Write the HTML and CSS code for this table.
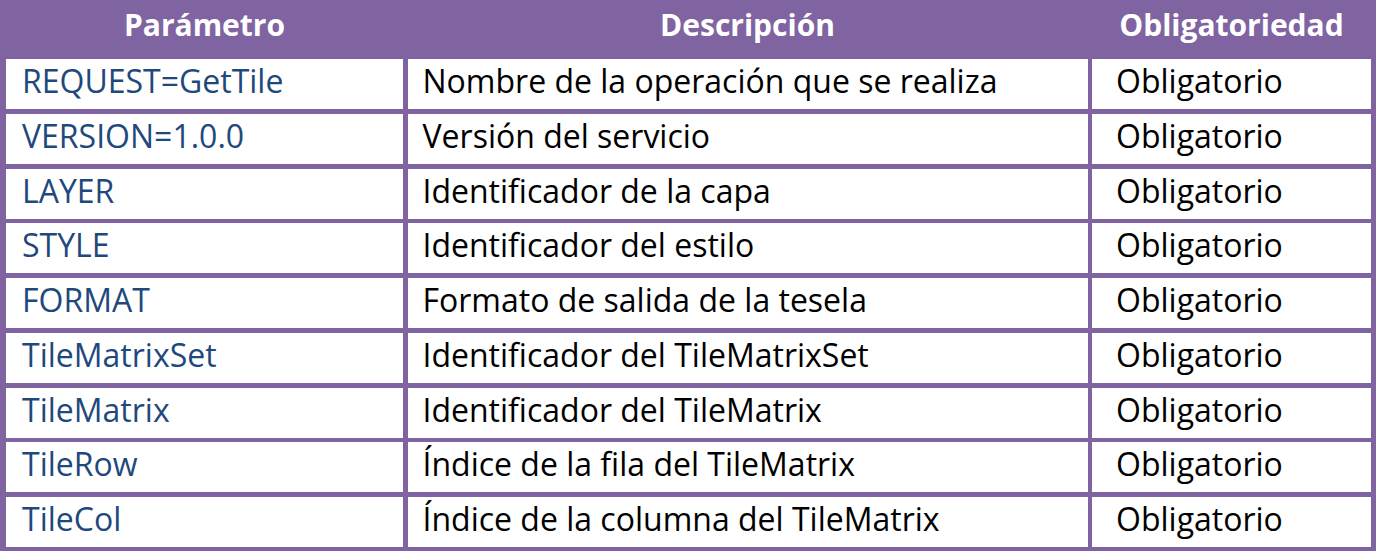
FILE: index.html
```html
<!DOCTYPE html>
<html lang="es">
<head>
<meta charset="utf-8">
<title>Parámetros GetTile</title>
<link rel="stylesheet" href="styles.css">
</head>
<body>
<div class="params" role="table">
  <div class="head" role="columnheader">Parámetro</div>
  <div class="head" role="columnheader">Descripción</div>
  <div class="head" role="columnheader">Obligatoriedad</div>

  <div class="cell param">REQUEST=GetTile</div>
  <div class="cell">Nombre de la operación que se realiza</div>
  <div class="cell req">Obligatorio</div>

  <div class="cell param">VERSION=1.0.0</div>
  <div class="cell">Versión del servicio</div>
  <div class="cell req">Obligatorio</div>

  <div class="cell param">LAYER</div>
  <div class="cell">Identificador de la capa</div>
  <div class="cell req">Obligatorio</div>

  <div class="cell param">STYLE</div>
  <div class="cell">Identificador del estilo</div>
  <div class="cell req">Obligatorio</div>

  <div class="cell param">FORMAT</div>
  <div class="cell">Formato de salida de la tesela</div>
  <div class="cell req">Obligatorio</div>

  <div class="cell param">TileMatrixSet</div>
  <div class="cell">Identificador del TileMatrixSet</div>
  <div class="cell req">Obligatorio</div>

  <div class="cell param">TileMatrix</div>
  <div class="cell">Identificador del TileMatrix</div>
  <div class="cell req">Obligatorio</div>

  <div class="cell param">TileRow</div>
  <div class="cell">Índice de la fila del TileMatrix</div>
  <div class="cell req">Obligatorio</div>

  <div class="cell param">TileCol</div>
  <div class="cell">Índice de la columna del TileMatrix</div>
  <div class="cell req">Obligatorio</div>
</div>
</body>
</html>
```
FILE: styles.css
```css
html, body {
  margin: 0;
  padding: 0;
  background: #ffffff;
}

.params {
  display: grid;
  grid-template-columns: 397px 680px 279px;
  grid-template-rows: 54.25px repeat(9, 50px);
  column-gap: 4.5px;
  row-gap: 4.75px;
  width: fit-content;
  padding: 0 5px 4px 6px;
  background: #8064a2;
  font-family: "Open Sans", "Liberation Sans", sans-serif;
  font-size: 32px;
  font-stretch: 88%;
  color: #000000;
}

.head {
  color: #ffffff;
  font-weight: 700;
  font-size: 30px;
  text-align: center;
  line-height: 50px;
  white-space: nowrap;
}

.cell {
  background: #ffffff;
  line-height: 44px;
  padding-left: 15px;
  white-space: nowrap;
}

.cell.param {
  color: #1f497d;
  padding-left: 16px;
}

.cell.req {
  padding-left: 24px;
}
```
